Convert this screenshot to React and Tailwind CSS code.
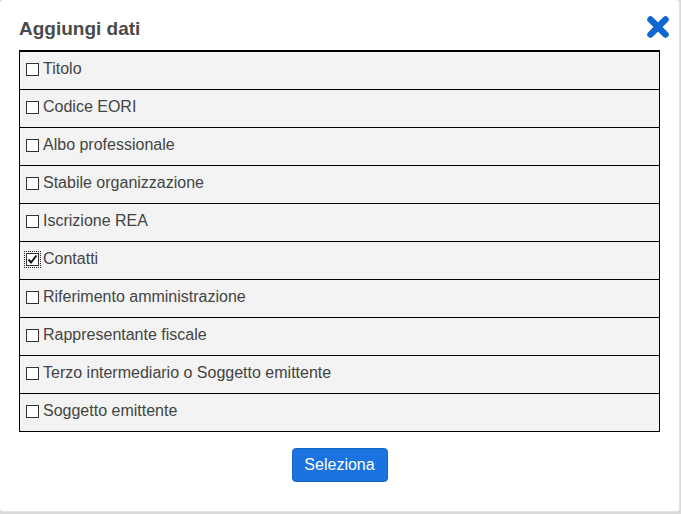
import React from "react";

const items = [
  "Titolo",
  "Codice EORI",
  "Albo professionale",
  "Stabile organizzazione",
  "Iscrizione REA",
  "Contatti",
  "Riferimento amministrazione",
  "Rappresentante fiscale",
  "Terzo intermediario o Soggetto emittente",
  "Soggetto emittente",
];

function Box({ checked }) {
  return (
    <span
      className={
        "relative inline-flex w-[13px] h-[13px] shrink-0 border border-[#333] bg-white items-center justify-center " +
        (checked ? "outline outline-1 outline-dotted outline-[#222] outline-offset-[1px]" : "")
      }
    >
      {checked && (
        <svg width="11" height="11" viewBox="0 0 11 11" className="absolute left-0 top-0">
          <path d="M1.5 5.5 L4 8.5 L9.5 1.5" fill="none" stroke="#111" strokeWidth="2" />
        </svg>
      )}
    </span>
  );
}

export default function App() {
  return (
    <div
      className="w-[681px] h-[514px] bg-[#d9d9d9] overflow-hidden"
      style={{ fontFamily: '"Liberation Sans", Arial, sans-serif' }}
    >
      <div className="w-[680px] h-[512px] bg-white rounded-[4px] border-r border-b border-[#e2e2e2] flex flex-col px-[19px]">
        <div className="flex items-center justify-between h-[50px] pt-[8px]">
          <h1 className="text-[19px] font-bold text-[#4a4a4a] leading-[22px]">Aggiungi dati</h1>
          <svg width="24" height="24" viewBox="0 0 24 24" className="mr-[-10px] mt-[-4px]">
            <path d="M4.5 4.5 L19.5 19.5 M19.5 4.5 L4.5 19.5" stroke="#0e66cf" strokeWidth="6.5" strokeLinecap="round" />
          </svg>
        </div>
        <div className="w-[641px] border border-black border-t-2">
          {items.map((t, i) => (
            <div
              key={t}
              className={
                "bg-[#f3f3f3] flex items-center gap-[4px] pl-[6px] pb-[3px] text-[16px] text-[#444] " +
                (i < items.length - 1 ? "h-[38px] border-b border-black" : "h-[37px]")
              }
            >
              <Box checked={t === "Contatti"} />
              <span className="leading-none">{t}</span>
            </div>
          ))}
        </div>
        <div className="flex justify-center mt-[16px]">
          <button className="w-[96px] h-[34px] bg-[#1a73e0] border border-[#1263c4] rounded-[4px] text-white text-[16px]">
            Seleziona
          </button>
        </div>
      </div>
    </div>
  );
}
